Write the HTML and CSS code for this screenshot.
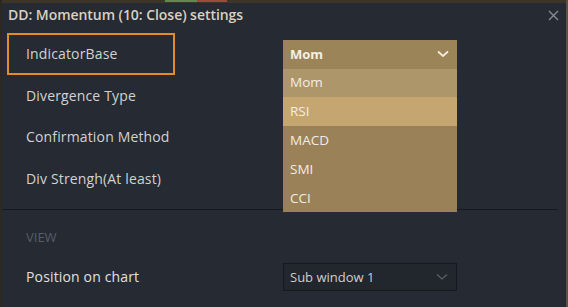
FILE: index.html
```html
<!DOCTYPE html>
<html>
<head>
<meta charset="utf-8">
<link rel="stylesheet" href="styles.css">
</head>
<body>
<div class="frame">
  <div class="topstrip"><span class="seg-green"></span><span class="seg-red"></span></div>
  <div class="dialog">
    <div class="header">
      <div class="title">DD: Momentum (10: Close) settings</div>
      <svg class="close" width="11" height="11" viewBox="0 0 11 11"><path d="M1 1L10 10M10 1L1 10" stroke="#878a90" stroke-width="1.4"/></svg>
    </div>
    <div class="rows">
      <div class="row">
        <div class="label focused">IndicatorBase</div>
        <div class="control">
          <div class="select open">
            <span>Mom</span>
            <svg class="chev" width="12" height="8" viewBox="0 0 12 8"><path d="M1 1.5L6 6L11 1.5" fill="none" stroke="#f2ece0" stroke-width="1.8"/></svg>
          </div>
          <ul class="menu">
            <li class="item current">Mom</li>
            <li class="item hover">RSI</li>
            <li class="item">MACD</li>
            <li class="item">SMI</li>
            <li class="item">CCI</li>
          </ul>
        </div>
      </div>
      <div class="row"><div class="label">Divergence Type</div></div>
      <div class="row short"><div class="label">Confirmation Method</div></div>
      <div class="row"><div class="label">Div Strengh(At least)</div></div>
    </div>
    <div class="separator"></div>
    <div class="view">
      <div class="section-title">VIEW</div>
      <div class="row">
        <div class="label">Position on chart</div>
        <div class="control">
          <div class="select dark">
            <span>Sub window 1</span>
            <svg class="chev" width="12" height="8" viewBox="0 0 12 8"><path d="M1 1.5L6 6L11 1.5" fill="none" stroke="#5c6169" stroke-width="1.2"/></svg>
          </div>
        </div>
      </div>
    </div>
  </div>
</div>
</body>
</html>
```

FILE: styles.css
```css
* { box-sizing: border-box; }
html, body { margin: 0; padding: 0; }
body {
  width: 568px;
  height: 307px;
  overflow: hidden;
  background: #262a33;
  font-family: "Open Sans", "DejaVu Sans", sans-serif;
}
.frame {
  width: 568px;
  height: 307px;
  display: flex;
  flex-direction: column;
  border-left: 2px solid #2c2822;
  border-right: 2px solid #5c5242;
}
.topstrip {
  height: 3px;
  background: #3e3529;
  position: relative;
  flex: none;
}
.seg-green, .seg-red {
  position: absolute;
  top: 0;
  height: 2px;
}
.seg-green { left: 163px; width: 32px; background: #5f8a55; }
.seg-red { left: 195px; width: 30px; background: #9c4a3e; }
.dialog {
  flex: 1;
  display: flex;
  flex-direction: column;
  background: #262a33;
}
.header {
  height: 30px;
  display: flex;
  align-items: center;
  justify-content: space-between;
  padding: 0 7px 0 6px;
}
.title {
  font-size: 14px;
  font-weight: 600;
  color: #d9d1c1;
  letter-spacing: -0.05px;
  margin-top: -7px;
}
.close { margin-top: -6px; }
.rows {
  padding-left: 5px;
}
.row {
  display: flex;
  align-items: center;
  height: 42px;
}
.row.short { height: 41px; }
.label {
  width: 276px;
  padding-left: 19px;
  padding-bottom: 2px;
  font-size: 14px;
  letter-spacing: 0.15px;
  color: #d2d2d2;
  height: 100%;
  display: flex;
  align-items: center;
}
.label.focused {
  width: 168px;
  margin-right: 108px;
  padding-left: 17px;
  border: 2px solid #e08d2a;
}
.control {
  position: relative;
  width: 174px;
}
.select {
  height: 29px;
  display: flex;
  align-items: center;
  justify-content: space-between;
  padding: 0 8px 0 7px;
  font-size: 13px;
}
.select.open {
  background: #9c8459;
  color: #f4efe6;
  font-weight: 700;
}
.select.dark {
  background: #22262d;
  border: 1px solid #161a1f;
  color: #cfcfcf;
  padding-left: 6px;
  height: 28px;
}
.menu {
  position: absolute;
  left: 0;
  top: 29px;
  width: 174px;
  margin: 0;
  padding: 0;
  list-style: none;
  background: #9a8158;
  z-index: 2;
}
.item {
  height: 28.8px;
  display: flex;
  align-items: center;
  padding-left: 7px;
  padding-bottom: 1px;
  font-size: 13.5px;
  color: #f2ede4;
}
.item.current { background: #ae966b; }
.item.hover { background: #c6a670; }
.separator {
  height: 1px;
  margin-top: 9px;
  margin-right: 8px;
  background: #15181d;
  flex: none;
}
.view {
  padding-left: 5px;
}
.section-title {
  padding-left: 19px;
  height: 45px;
  display: flex;
  align-items: center;
  font-size: 13px;
  color: #585d66;
  margin-top: 4px;
}
.view .row { height: 36px; }
.view .label { color: #e0e0e0; }
```
